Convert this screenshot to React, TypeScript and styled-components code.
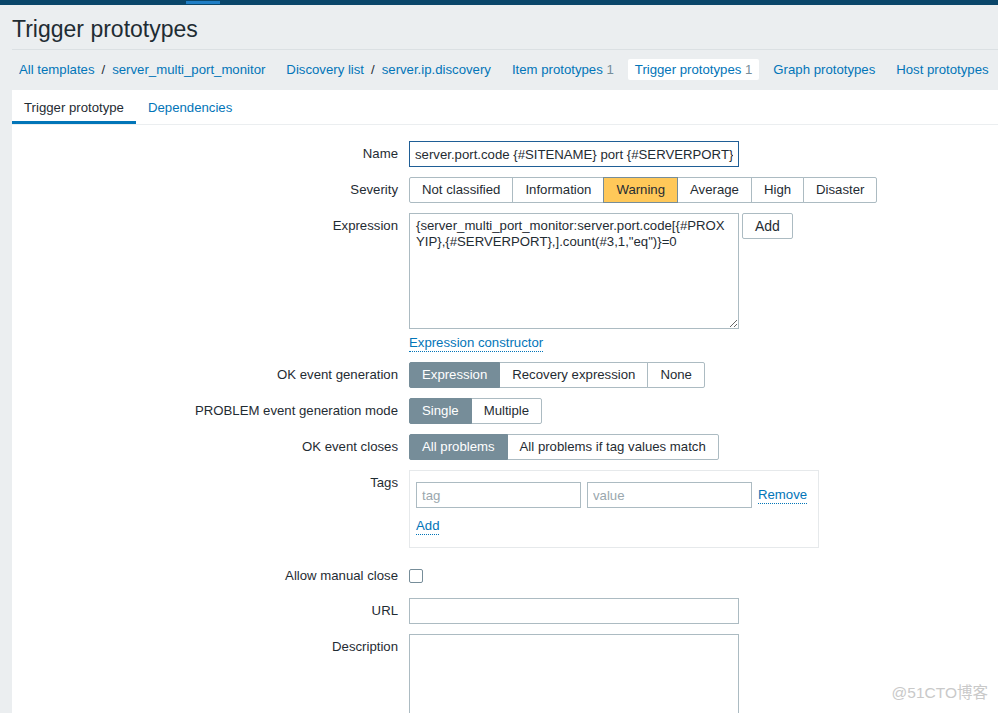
import React from 'react';
import styled, { createGlobalStyle } from 'styled-components';

const GlobalStyle = createGlobalStyle`
  html, body {
    margin: 0;
    padding: 0;
    overflow: hidden;
    background: #ebeef0;
  }
  body {
    font-family: "Liberation Sans", Arial, sans-serif;
    font-size: 13.2px;
    color: #1f2c33;
  }
  * {
    box-sizing: border-box;
  }
`;

const Page = styled.div`
  position: relative;
  height: 713px;
  overflow: hidden;
`;

const TopBar = styled.div`
  display: flex;
  align-items: flex-start;
  height: 5px;
  padding-left: 186px;
  background: #0a466a;
`;

const TopBarMark = styled.span`
  display: block;
  width: 34px;
  height: 3px;
  margin-top: 1px;
  background: #1f7ec6;
`;

const Header = styled.div`
  margin: 0 0 0 12px;
  padding: 11px 0 7px;
  border-bottom: 1px solid #dbe0e3;
`;

const Title = styled.h1`
  margin: 0;
  font-size: 23px;
  font-weight: normal;
  line-height: 26px;
  color: #1f2c33;
`;

const NavBar = styled.nav`
  display: flex;
  align-items: center;
  gap: 7px;
  height: 40px;
  padding: 0 0 2px 12px;
`;

const NavGroup = styled.div`
  display: flex;
  align-items: center;
`;

const NavItem = styled.a<{ $active?: boolean }>`
  display: inline-block;
  padding: 4px 7px;
  line-height: 13px;
  color: #0275b8;
  text-decoration: none;
  background: ${p => (p.$active ? '#ffffff' : 'transparent')};
  border-radius: 2px;
  white-space: nowrap;
`;

const NavCount = styled.span`
  color: #768d99;
`;

const Slash = styled.span`
  color: #1f2c33;
`;

const Panel = styled.div`
  margin-left: 12px;
  background: #ffffff;
  min-height: 640px;
`;

const TabBar = styled.div`
  display: flex;
  border-bottom: 1px solid #ebeef0;
`;

const Tab = styled.a<{ $active?: boolean }>`
  display: flex;
  align-items: center;
  height: 34px;
  padding: 4px 12px 0 12px;
  border-bottom: 3px solid ${p => (p.$active ? '#0275b8' : 'transparent')};
  color: ${p => (p.$active ? '#1f2c33' : '#0275b8')};
  text-decoration: none;
  white-space: nowrap;
`;

const Form = styled.div`
  display: grid;
  grid-template-columns: 386px 1fr;
  column-gap: 11px;
  row-gap: 10px;
  padding-top: 16px;
`;

const Label = styled.label<{ $extraTop?: number }>`
  text-align: right;
  line-height: 24px;
  padding-top: 1px;
  white-space: nowrap;
  margin-top: ${p => p.$extraTop ?? 0}px;
`;

const Field = styled.div<{ $extraTop?: number }>`
  display: flex;
  flex-direction: column;
  align-items: flex-start;
  margin-top: ${p => p.$extraTop ?? 0}px;
`;

const TextInput = styled.input<{ $width?: number; $focused?: boolean }>`
  width: ${p => p.$width ?? 330}px;
  height: 26px;
  padding: 0 5px;
  border: 1px solid ${p => (p.$focused ? '#1f5e96' : '#acbbc2')};
  border-radius: 0;
  font-family: inherit;
  font-size: 13.2px;
  color: #1f2c33;
  background: #ffffff;
  outline: none;

  &::placeholder {
    color: #9aa7ae;
  }
`;

const TextArea = styled.textarea<{ $height: number }>`
  width: 330px;
  height: ${p => p.$height}px;
  padding: 4px 6px;
  border: 1px solid #acbbc2;
  border-radius: 0;
  font-family: inherit;
  font-size: 13.2px;
  line-height: 16px;
  color: #1f2c33;
  background: #ffffff;
  resize: vertical;
  outline: none;
  overflow: hidden;
`;

const InlineRow = styled.div`
  display: flex;
  align-items: flex-start;
  gap: 3px;
`;

const Button = styled.button`
  height: 26px;
  padding: 0 12px;
  border: 1px solid #acbbc2;
  border-radius: 2px;
  background: #ffffff;
  font-family: inherit;
  font-size: 14px;
  color: #1f2c33;
`;

const LinkAction = styled.a<{ $gapTop?: number }>`
  margin-top: ${p => p.$gapTop ?? 0}px;
  line-height: 16px;
  color: #0275b8;
  text-decoration: none;
  border-bottom: 1px dotted #0275b8;
  white-space: nowrap;
`;

const Segmented = styled.div`
  display: inline-flex;
`;

type SegmentTone = 'plain' | 'selected' | 'warning';

const Segment = styled.span<{ $tone: SegmentTone }>`
  display: inline-block;
  height: 26px;
  line-height: 24px;
  padding: 0 12px;
  margin-left: -1px;
  border: 1px solid ${p => (p.$tone === 'plain' ? '#acbbc2' : '#768d99')};
  background: ${p =>
    p.$tone === 'selected' ? '#768d99' : p.$tone === 'warning' ? '#ffc859' : '#ffffff'};
  color: ${p => (p.$tone === 'selected' ? '#ffffff' : '#1f2c33')};
  white-space: nowrap;
  position: relative;
  z-index: ${p => (p.$tone === 'plain' ? 0 : 1)};

  &:first-child {
    margin-left: 0;
    border-radius: 2px 0 0 2px;
  }
  &:last-child {
    border-radius: 0 2px 2px 0;
  }
`;

const TagsBox = styled.div`
  display: flex;
  flex-direction: column;
  align-items: flex-start;
  gap: 10px;
  width: 410px;
  padding: 11px 6px 12px;
  border: 1px solid #e6e9eb;
`;

const TagRow = styled.div`
  display: flex;
  align-items: center;
  gap: 6px;
`;

const Checkbox = styled.input`
  appearance: none;
  width: 14px;
  height: 14px;
  margin: 6px 0 0 0;
  border: 1px solid #768d99;
  border-radius: 2px;
  background: #ffffff;
`;

const Watermark = styled.div`
  position: absolute;
  right: 10px;
  bottom: 11px;
  font-family: "Liberation Sans", "Noto Sans CJK SC", sans-serif;
  font-size: 15.5px;
  line-height: 18px;
  color: #c9c9c9;
  white-space: nowrap;
`;

interface SegOption {
  label: string;
  tone: SegmentTone;
}

function SegmentGroup({ options }: { options: SegOption[] }): React.JSX.Element {
  return (
    <Segmented>
      {options.map(o => (
        <Segment key={o.label} $tone={o.tone}>
          {o.label}
        </Segment>
      ))}
    </Segmented>
  );
}

const severityOptions: SegOption[] = [
  { label: 'Not classified', tone: 'plain' },
  { label: 'Information', tone: 'plain' },
  { label: 'Warning', tone: 'warning' },
  { label: 'Average', tone: 'plain' },
  { label: 'High', tone: 'plain' },
  { label: 'Disaster', tone: 'plain' },
];

const expression =
  '{server_multi_port_monitor:server.port.code[{#PROX\nYIP},{#SERVERPORT},].count(#3,1,"eq")}=0';

function App(): React.JSX.Element {
  return (
    <Page>
      <GlobalStyle />
      <TopBar>
        <TopBarMark />
      </TopBar>
      <Header>
        <Title>Trigger prototypes</Title>
      </Header>
      <NavBar>
        <NavGroup>
          <NavItem>All templates</NavItem>
          <Slash>/</Slash>
          <NavItem>server_multi_port_monitor</NavItem>
        </NavGroup>
        <NavGroup>
          <NavItem>Discovery list</NavItem>
          <Slash>/</Slash>
          <NavItem>server.ip.discovery</NavItem>
        </NavGroup>
        <NavItem>
          Item prototypes <NavCount>1</NavCount>
        </NavItem>
        <NavItem $active>
          Trigger prototypes <NavCount>1</NavCount>
        </NavItem>
        <NavItem>Graph prototypes</NavItem>
        <NavItem>Host prototypes</NavItem>
      </NavBar>

      <Panel>
        <TabBar>
          <Tab $active>Trigger prototype</Tab>
          <Tab>Dependencies</Tab>
        </TabBar>

        <Form>
          <Label>Name</Label>
          <Field>
            <TextInput $focused defaultValue="server.port.code {#SITENAME} port {#SERVERPORT}" />
          </Field>

          <Label>Severity</Label>
          <Field>
            <SegmentGroup options={severityOptions} />
          </Field>

          <Label>Expression</Label>
          <Field>
            <InlineRow>
              <TextArea $height={116} defaultValue={expression} />
              <Button>Add</Button>
            </InlineRow>
            <LinkAction $gapTop={6}>Expression constructor</LinkAction>
          </Field>

          <Label>OK event generation</Label>
          <Field>
            <SegmentGroup
              options={[
                { label: 'Expression', tone: 'selected' },
                { label: 'Recovery expression', tone: 'plain' },
                { label: 'None', tone: 'plain' },
              ]}
            />
          </Field>

          <Label>PROBLEM event generation mode</Label>
          <Field>
            <SegmentGroup
              options={[
                { label: 'Single', tone: 'selected' },
                { label: 'Multiple', tone: 'plain' },
              ]}
            />
          </Field>

          <Label>OK event closes</Label>
          <Field>
            <SegmentGroup
              options={[
                { label: 'All problems', tone: 'selected' },
                { label: 'All problems if tag values match', tone: 'plain' },
              ]}
            />
          </Field>

          <Label>Tags</Label>
          <Field>
            <TagsBox>
              <TagRow>
                <TextInput $width={165} placeholder="tag" />
                <TextInput $width={165} placeholder="value" />
                <LinkAction>Remove</LinkAction>
              </TagRow>
              <LinkAction>Add</LinkAction>
            </TagsBox>
          </Field>

          <Label $extraTop={5}>Allow manual close</Label>
          <Field $extraTop={5}>
            <Checkbox type="checkbox" />
          </Field>

          <Label>URL</Label>
          <Field>
            <TextInput />
          </Field>

          <Label>Description</Label>
          <Field>
            <TextArea $height={110} />
          </Field>
        </Form>
      </Panel>
      <Watermark>@51CTO博客</Watermark>
    </Page>
  );
}

export default App;
